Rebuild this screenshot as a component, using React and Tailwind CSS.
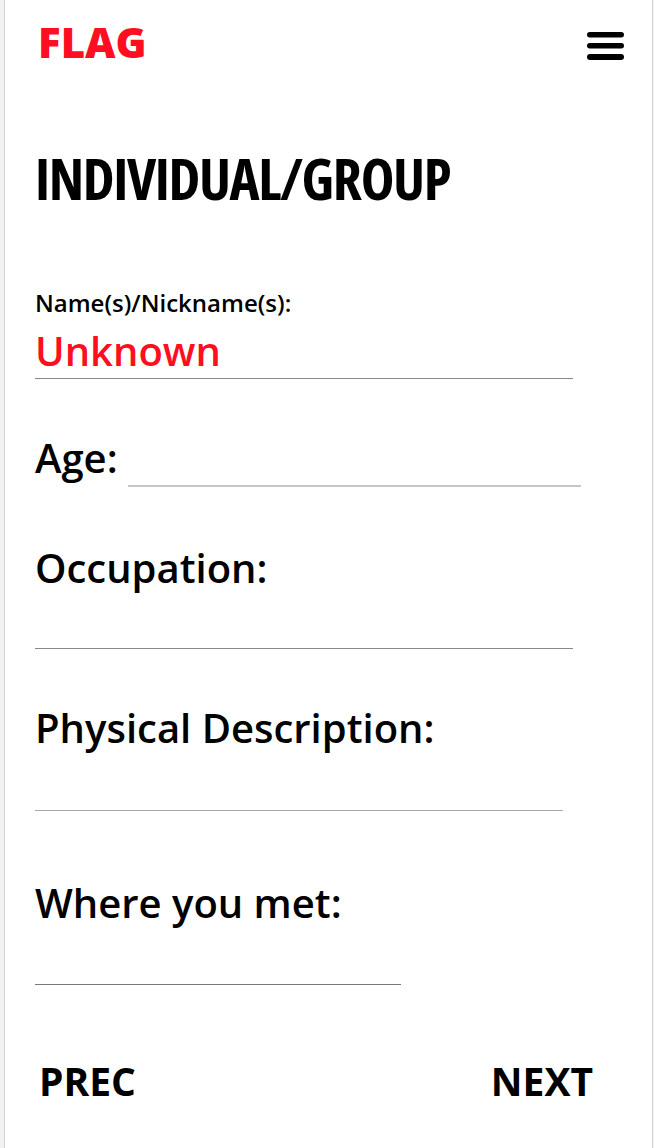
import React from "react";

const font = "font-['Open_Sans',sans-serif]";
const label = `${font} font-semibold text-[40px] leading-none text-black`;

function Bars() {
  return (
    <svg width="37" height="29" viewBox="0 0 37 29" className="block">
      <rect x="0" y="0" width="37" height="5.5" rx="2.75" fill="#000" />
      <rect x="0" y="11" width="37" height="5.5" rx="2.75" fill="#000" />
      <rect x="0" y="22" width="37" height="6" rx="3" fill="#000" />
    </svg>
  );
}

export default function App() {
  return (
    <div className="bg-[#f2f2f2] pl-[4px] pr-[1px] min-h-[1148px]">
      <div className="bg-white border-x border-[#d4d4d4] min-h-[1148px] pb-[40px]">
        <div className="flex items-start justify-between pt-[21px] pl-[33px] pr-[28px]">
          <div className={`${font} font-extrabold leading-none text-[42px] text-[#ff0d20]`}>FLAG</div>
          <div className="mt-[11px]">
            <Bars />
          </div>
        </div>

        <div className="pl-[30px]">
          <h1 className={`${font} font-bold [font-stretch:75%] leading-none text-[57px] tracking-[-1.4px] text-black mt-[87px]`}>
            INDIVIDUAL/GROUP
          </h1>

          <div className={`${font} font-semibold text-[24px] leading-none text-black mt-[84px]`}>
            Name(s)/Nickname(s):
          </div>
          <div className="w-[538px] mt-[16px] pb-[7px] border-b border-[#8a8a8a]">
            <div className={`${font} font-semibold text-[40px] leading-none text-[#ff0d20]`}>Unknown</div>
          </div>

          <div className="flex items-start mt-[59px]">
            <div className={label}>Age:</div>
            <div className="ml-[10px] mt-[47px] w-[453px] h-[2px] bg-[#c6c6c6]" />
          </div>

          <div className={`${label} mt-[61px]`}>Occupation:</div>
          <div className="mt-[60px] w-[538px] h-px bg-[#8a8a8a]" />

          <div className={`${label} mt-[59px]`}>Physical Description:</div>
          <div className="mt-[62px] w-[528px] h-px bg-[#a8a8a8]" />

          <div className={`${label} mt-[72px]`}>Where you met:</div>
          <div className="mt-[61px] w-[366px] h-px bg-[#7a7a7a]" />
        </div>

        <div className={`flex justify-between mt-[76px] pl-[34px] pr-[59px] ${font} font-bold leading-none text-[39px] text-black`}>
          <span>PREC</span>
          <span>NEXT</span>
        </div>
      </div>
    </div>
  );
}
